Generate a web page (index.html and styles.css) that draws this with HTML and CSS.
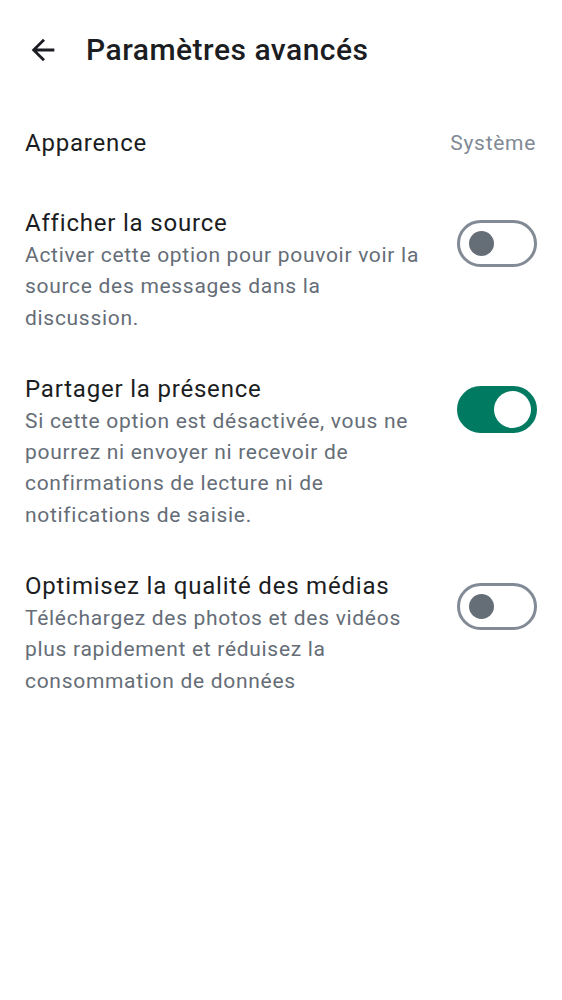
FILE: index.html
```html
<!DOCTYPE html>
<html lang="fr">
<head>
<meta charset="utf-8">
<link rel="stylesheet" href="styles.css">
</head>
<body>
<div class="app">
  <header class="topbar">
    <svg class="back" width="34" height="34" viewBox="0 0 24 24"><path d="M20 11H7.83l5.59-5.59L12 4l-8 8 8 8 1.41-1.41L7.83 13H20v-2z" fill="#1b1d22"/></svg>
    <h1 class="title">Paramètres avancés</h1>
  </header>
  <div class="list">
    <div class="row simple">
      <div class="label">Apparence</div>
      <div class="value">Système</div>
    </div>
    <div class="row">
      <div class="texts">
        <div class="label">Afficher la source</div>
        <div class="desc">Activer cette option pour pouvoir voir la source des messages dans la discussion.</div>
      </div>
      <div class="switch off"><span class="knob"></span></div>
    </div>
    <div class="row">
      <div class="texts">
        <div class="label">Partager la présence</div>
        <div class="desc">Si cette option est désactivée, vous ne pourrez ni envoyer ni recevoir de confirmations de lecture ni de notifications de saisie.</div>
      </div>
      <div class="switch on"><span class="knob"></span></div>
    </div>
    <div class="row">
      <div class="texts">
        <div class="label">Optimisez la qualité des médias</div>
        <div class="desc">Téléchargez des photos et des vidéos plus rapidement et réduisez la consommation de données</div>
      </div>
      <div class="switch off"><span class="knob"></span></div>
    </div>
  </div>
</div>
</body>
</html>
```
FILE: styles.css
```css
html, body { margin: 0; padding: 0; background: #fff; }
body { font-family: Roboto, "Noto Sans", sans-serif; color: #1b1d22; }
.app { width: 562px; }
.topbar { display: flex; align-items: center; height: 100px; padding-left: 26px; box-sizing: border-box; }
.back { flex: none; }
.title { margin: 0 0 0 26px; font-size: 30px; line-height: 36px; font-weight: 500; letter-spacing: 0.5px; color: #1b1d22; }
.list { display: flex; flex-direction: column; }
.row { display: flex; align-items: flex-start; justify-content: space-between; padding: 20px 25px 19px 25px; gap: 30px; }
.row.simple { align-items: center; padding: 27px 26px 28px 25px; }
.label { font-size: 24px; line-height: 32px; letter-spacing: 0.8px; color: #1b1d22; }
.value { font-size: 21px; letter-spacing: 0.7px; color: #818a95; }
.texts { flex: 1; min-width: 0; }
.desc { font-size: 21px; line-height: 31.3px; letter-spacing: 0.7px; color: #656d77; margin-top: 1px; }
.switch { flex: none; width: 74px; height: 41px; border-radius: 25px; border: 3px solid #818a95; display: flex; align-items: center; margin-top: 13px; box-sizing: content-box; }
.switch.off .knob { width: 25px; height: 25px; border-radius: 50%; background: #656d77; margin-left: 9px; }
.switch.on { background: #007a61; border-color: #007a61; justify-content: flex-end; }
.switch.on .knob { width: 37px; height: 37px; border-radius: 50%; background: #fff; margin-right: 3px; }
```
